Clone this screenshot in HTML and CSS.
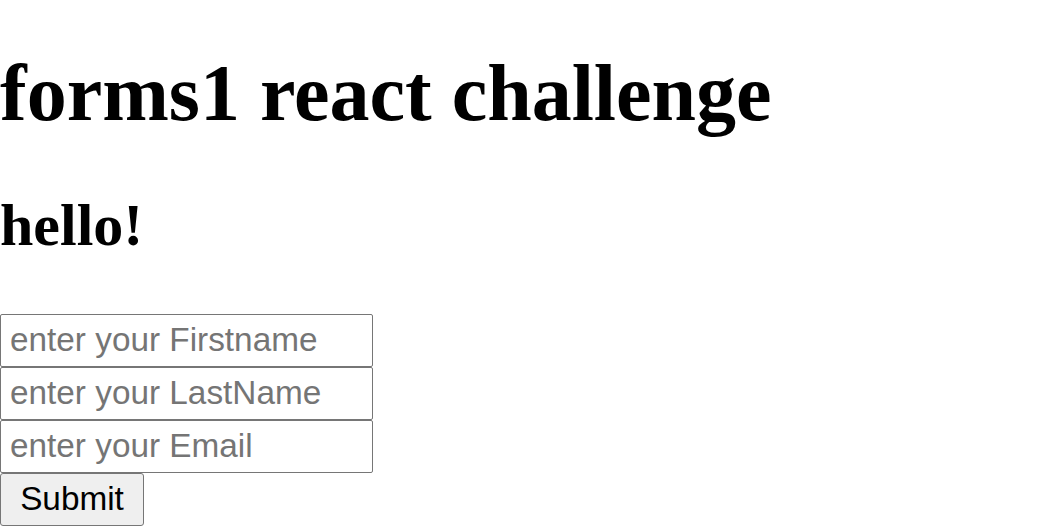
FILE: index.html
```html
<!DOCTYPE html>
<html>
<head>
<meta charset="utf-8">
<link rel="stylesheet" href="styles.css">
</head>
<body>
<div class="app">
  <h1 class="title">forms1 react challenge</h1>
  <h2 class="greet">hello!</h2>
  <form class="form">
    <input class="field" type="text" placeholder="enter your Firstname">
    <input class="field" type="text" placeholder="enter your LastName">
    <input class="field" type="text" placeholder="enter your Email">
    <button class="submit" type="button">Submit</button>
  </form>
</div>
</body>
</html>
```
FILE: styles.css
```css
html, body {
  margin: 0;
  padding: 0;
  background: #fff;
}
.app {
  font-family: "Liberation Serif", "Times New Roman", serif;
  color: #000;
}
.title {
  font-size: 80px;
  font-weight: bold;
  margin: 47.6px 0 52.6px;
  line-height: normal;
}
.greet {
  font-size: 60px;
  font-weight: bold;
  margin: 0 0 53.8px;
  line-height: normal;
}
.form {
  display: flex;
  flex-direction: column;
  align-items: flex-start;
}
.field {
  box-sizing: border-box;
  width: 373px;
  height: 53px;
  margin: 0;
  padding: 0 9px;
  border: 1px solid #767676;
  border-radius: 2px;
  font-family: "Liberation Sans", Arial, sans-serif;
  font-size: 33.33px;
  color: #000;
  background: #fff;
}
.field::placeholder {
  color: #757575;
}
.submit {
  box-sizing: border-box;
  width: 144px;
  height: 53px;
  margin: 0;
  padding: 0;
  border: 1px solid #767676;
  border-radius: 3px;
  background: #efefef;
  font-family: "Liberation Sans", Arial, sans-serif;
  font-size: 33.33px;
  color: #000;
}
```
